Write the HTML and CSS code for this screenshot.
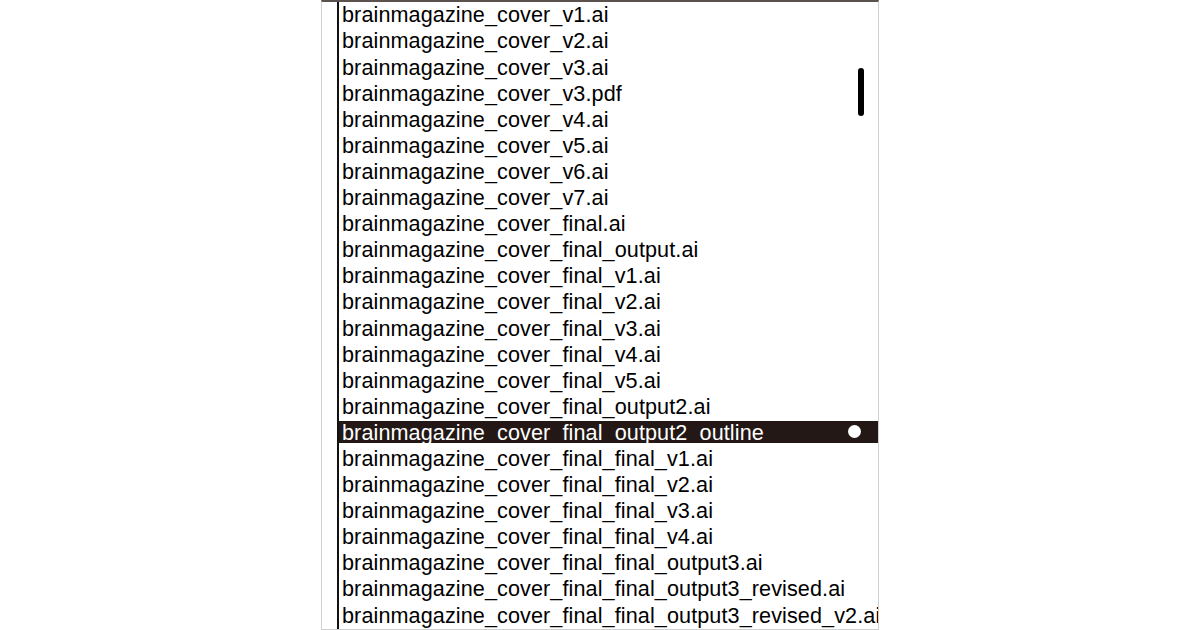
FILE: index.html
```html
<!DOCTYPE html>
<html lang="en">
<head>
    <meta charset="UTF-8">
    <title>Files</title>
    <link rel="stylesheet" href="styles.css">
</head>
<body>
    <div class="panel">
        <div class="gutter"></div>
        <ul class="file-list">
            <li class="file">brainmagazine_cover_v1.ai</li>
            <li class="file">brainmagazine_cover_v2.ai</li>
            <li class="file">brainmagazine_cover_v3.ai</li>
            <li class="file">brainmagazine_cover_v3.pdf</li>
            <li class="file">brainmagazine_cover_v4.ai</li>
            <li class="file">brainmagazine_cover_v5.ai</li>
            <li class="file">brainmagazine_cover_v6.ai</li>
            <li class="file">brainmagazine_cover_v7.ai</li>
            <li class="file">brainmagazine_cover_final.ai</li>
            <li class="file">brainmagazine_cover_final_output.ai</li>
            <li class="file">brainmagazine_cover_final_v1.ai</li>
            <li class="file">brainmagazine_cover_final_v2.ai</li>
            <li class="file">brainmagazine_cover_final_v3.ai</li>
            <li class="file">brainmagazine_cover_final_v4.ai</li>
            <li class="file">brainmagazine_cover_final_v5.ai</li>
            <li class="file">brainmagazine_cover_final_output2.ai</li>
            <li class="file selected">brainmagazine_cover_final_output2_outline<span class="dot"></span></li>
            <li class="file">brainmagazine_cover_final_final_v1.ai</li>
            <li class="file">brainmagazine_cover_final_final_v2.ai</li>
            <li class="file">brainmagazine_cover_final_final_v3.ai</li>
            <li class="file">brainmagazine_cover_final_final_v4.ai</li>
            <li class="file">brainmagazine_cover_final_final_output3.ai</li>
            <li class="file">brainmagazine_cover_final_final_output3_revised.ai</li>
            <li class="file">brainmagazine_cover_final_final_output3_revised_v2.ai</li>
        </ul>
        <div class="scrollbar"></div>
    </div>
</body>
</html>
```

FILE: styles.css
```css
* {
    margin: 0;
    padding: 0;
    box-sizing: border-box;
}

body {
    background: #ffffff;
    font-family: "Liberation Sans", Arial, sans-serif;
    color: #000000;
}

.panel {
    position: relative;
    display: flex;
    width: 558px;
    height: 630px;
    margin-left: 321px;
    border-left: 1px solid #cfcfcf;
    border-right: 1px solid #cfcfcf;
    border-bottom: 1px solid #cfcfcf;
    border-top: 2px solid #5b524e;
    overflow: hidden;
}

.gutter {
    width: 17px;
    flex-shrink: 0;
    border-right: 2px solid #111111;
}

.file-list {
    list-style: none;
    flex: 1;
    display: flex;
    flex-direction: column;
    gap: 4.1px;
    padding-top: 1.4px;
}

.file {
    position: relative;
    height: 22px;
    line-height: 23px;
    font-size: 21.6px;
    letter-spacing: 0.1px;
    padding-left: 3px;
    white-space: nowrap;
}

.selected {
    background: #231815;
    color: #ffffff;
}

.dot {
    position: absolute;
    right: 19px;
    top: 4px;
    width: 13px;
    height: 13px;
    border-radius: 50%;
    background: #ffffff;
}

.scrollbar {
    position: absolute;
    left: 536px;
    top: 66px;
    width: 6px;
    height: 48px;
    border-radius: 3px;
    background: #000000;
}
```
